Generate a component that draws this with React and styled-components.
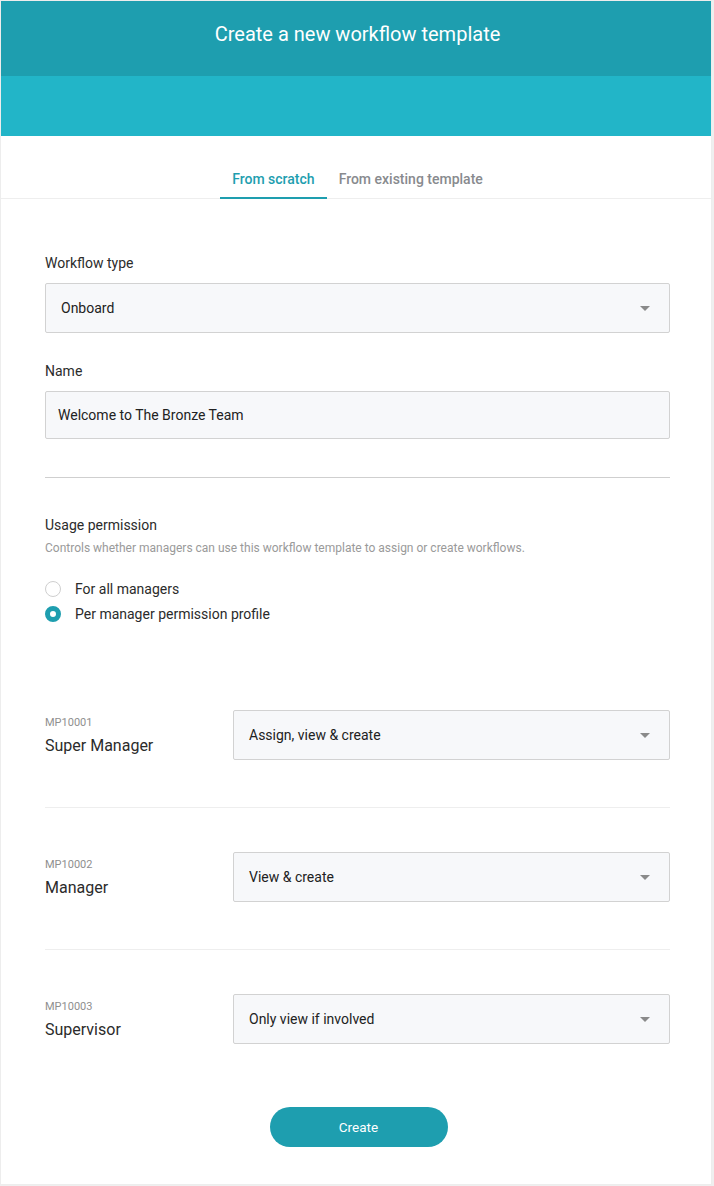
import React from "react";
import styled, { createGlobalStyle } from "styled-components";

const Global = createGlobalStyle`
  html, body { margin: 0; padding: 0; background: #efefef; }
  body { font-family: Roboto, "Noto Sans", Arial, sans-serif; -webkit-font-smoothing: antialiased; }
  * { box-sizing: border-box; }
`;

const Card = styled.div`
  width: 712px;
  height: 1185px;
  background: #fff;
  border: 1px solid rgba(0, 0, 0, 0.07);
  display: flex;
  flex-direction: column;
`;

const HeaderTop = styled.div`
  height: 75px;
  background: #1e9eaf;
  display: flex;
  align-items: center;
  justify-content: center;
  color: #fff;
  font-size: 20px;
  font-weight: 400;
  padding-bottom: 9px;
  padding-left: 3px;
`;

const HeaderBand = styled.div`
  height: 60px;
  background: #22b5c8;
`;

const TabBar = styled.div`
  display: flex;
  justify-content: center;
  margin-top: 33px;
  border-bottom: 1px solid #eeeeee;
  padding-left: 3px;
`;

const Tab = styled.div`
  padding: 0 12px 8px;
  line-height: 20px;
  font-size: 14px;
  font-weight: 500;
  color: ${(p) => (p.$active ? "#1e9eaf" : "#888a8e")};
  border-bottom: 2px solid ${(p) => (p.$active ? "#1e9eaf" : "transparent")};
  margin-bottom: -1px;
`;

const Form = styled.div`
  padding: 55px 41px 0 44px;
  display: flex;
  flex-direction: column;
`;

const Label = styled.div`
  font-size: 14px;
  line-height: 18px;
  color: #2b2b2b;
  margin-top: ${(p) => p.$mt || 0}px;
  margin-bottom: ${(p) => p.$mb || 0}px;
`;

const Field = styled.div`
  height: ${(p) => p.$h || 50}px;
  background: #f7f8fa;
  border: 1px solid #d2d2d2;
  border-radius: 2px;
  display: flex;
  align-items: center;
  justify-content: space-between;
  padding: 0 19px 0 ${(p) => p.$pl || 15}px;
  font-size: 14px;
  color: #222;
  flex: ${(p) => (p.$grow ? 1 : "none")};
`;

const Caret = styled.span`
  width: 0;
  height: 0;
  border-left: 5px solid transparent;
  border-right: 5px solid transparent;
  border-top: 5px solid #8a8a8a;
`;

const Divider = styled.div`
  height: 1px;
  background: ${(p) => p.$color || "#cfcfcf"};
  margin: ${(p) => p.$m};
`;

const Help = styled.div`
  font-size: 12px;
  line-height: 14px;
  color: #9a9a9a;
  margin-top: 7px;
`;

const RadioList = styled.div`
  margin-top: 21px;
  display: flex;
  flex-direction: column;
`;

const RadioRow = styled.label`
  display: flex;
  align-items: center;
  height: 25px;
  font-size: 14px;
  color: #2b2b2b;
  gap: 14px;
`;

const RadioDot = styled.span`
  width: 16px;
  height: 16px;
  border-radius: 50%;
  border: ${(p) => (p.$checked ? "5px solid #1e9eaf" : "1px solid #cfcfcf")};
  background: #fff;
  flex: none;
`;

const PermRow = styled.div`
  display: flex;
  align-items: flex-start;
  margin-top: ${(p) => p.$mt || 0}px;
`;

const PermInfo = styled.div`
  width: 188px;
  padding-top: 6px;
  display: flex;
  flex-direction: column;
`;

const Code = styled.div`
  font-size: 11px;
  line-height: 14px;
  color: #8f8f8f;
`;

const PermName = styled.div`
  font-size: 16px;
  line-height: 20px;
  color: #2b2b2b;
  margin-top: 6px;
`;

const ButtonWrap = styled.div`
  display: flex;
  justify-content: center;
  margin-top: 63px;
  padding-left: 2px;
`;

const Button = styled.button`
  width: 178px;
  height: 40px;
  border-radius: 20px;
  border: none;
  background: #1e9eaf;
  color: #fff;
  font-family: inherit;
  font-size: 13.5px;
  font-weight: 400;
`;

const perms = [
  { code: "MP10001", name: "Super Manager", value: "Assign, view & create" },
  { code: "MP10002", name: "Manager", value: "View & create" },
  { code: "MP10003", name: "Supervisor", value: "Only view if involved" },
];

export default function App() {
  return (
    <>
      <Global />
      <Card>
        <HeaderTop>Create a new workflow template</HeaderTop>
        <HeaderBand />
        <TabBar>
          <Tab $active>From scratch</Tab>
          <Tab>From existing template</Tab>
        </TabBar>
        <Form>
          <Label $mb={11}>Workflow type</Label>
          <Field>
            <span>Onboard</span>
            <Caret />
          </Field>
          <Label $mt={29} $mb={11}>Name</Label>
          <Field $h={48} $pl={12}>
            <span>Welcome to The Bronze Team</span>
          </Field>
          <Divider $m="38px 0 0" />
          <Label $mt={38}>Usage permission</Label>
          <Help>Controls whether managers can use this workflow template to assign or create workflows.</Help>
          <RadioList>
            <RadioRow>
              <RadioDot />
              For all managers
            </RadioRow>
            <RadioRow>
              <RadioDot $checked />
              Per manager permission profile
            </RadioRow>
          </RadioList>
          {perms.map((p, i) => (
            <React.Fragment key={p.code}>
              {i > 0 && <Divider $color="#eeeeee" $m="47px 0 44px" />}
              <PermRow $mt={i === 0 ? 84 : 0}>
                <PermInfo>
                  <Code>{p.code}</Code>
                  <PermName>{p.name}</PermName>
                </PermInfo>
                <Field $grow>
                  <span>{p.value}</span>
                  <Caret />
                </Field>
              </PermRow>
            </React.Fragment>
          ))}
          <ButtonWrap>
            <Button>Create</Button>
          </ButtonWrap>
        </Form>
      </Card>
    </>
  );
}
